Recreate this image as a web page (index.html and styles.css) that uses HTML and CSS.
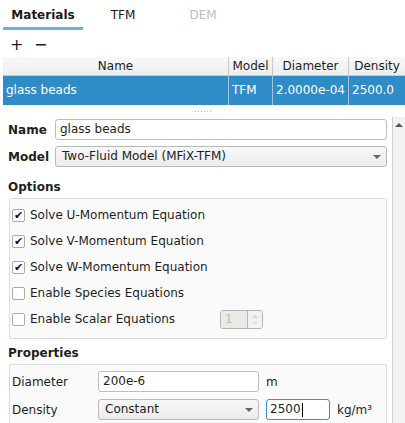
FILE: index.html
```html
<!DOCTYPE html>
<html>
<head>
<meta charset="utf-8">
<link rel="stylesheet" href="styles.css">
</head>
<body>
<div class="app">
  <div class="tabs">
    <div class="tab active">Materials</div>
    <div class="tab">TFM</div>
    <div class="tab disabled">DEM</div>
  </div>
  <div class="toolbar">
    <span class="tbtn">+</span>
    <span class="tbtn">−</span>
  </div>
  <div class="table">
    <div class="trow head">
      <div class="c c1">Name</div>
      <div class="c c2">Model</div>
      <div class="c c3">Diameter</div>
      <div class="c c4">Density</div>
    </div>
    <div class="trow sel">
      <div class="c c1 left">glass beads</div>
      <div class="c c2 left">TFM</div>
      <div class="c c3 left">2.0000e-04</div>
      <div class="c c4 left">2500.0</div>
    </div>
  </div>
  <div class="splitter"><span class="dots"></span></div>
  <div class="scrollarea">
    <div class="content">
      <div class="frow">
        <label class="blabel">Name</label>
        <div class="input grow">glass beads</div>
      </div>
      <div class="frow">
        <label class="blabel">Model</label>
        <div class="combo grow"><span>Two-Fluid Model (MFiX-TFM)</span><span class="arrow"></span></div>
      </div>
      <div class="section">Options</div>
      <div class="group options">
        <div class="chk"><span class="box on">✔</span><span>Solve U-Momentum Equation</span></div>
        <div class="chk"><span class="box on">✔</span><span>Solve V-Momentum Equation</span></div>
        <div class="chk"><span class="box on">✔</span><span>Solve W-Momentum Equation</span></div>
        <div class="chk"><span class="box"></span><span>Enable Species Equations</span></div>
        <div class="chk"><span class="box"></span><span class="sclabel">Enable Scalar Equations</span>
          <div class="spin"><span class="spinval">1</span><span class="spinbtn"><svg width="14" height="18" viewBox="0 0 14 18"><path d="M4 7 L7 4 L10 7 Z" fill="#d8d6d3"/><path d="M4 11 L7 14 L10 11 Z" fill="#e4e2df"/></svg></span></div>
        </div>
      </div>
      <div class="section prop">Properties</div>
      <div class="group props">
        <div class="prow">
          <span class="plabel">Diameter</span>
          <div class="input pin">200e-6</div>
          <span class="unit">m</span>
        </div>
        <div class="prow">
          <span class="plabel">Density</span>
          <div class="combo pin"><span>Constant</span><span class="arrow"></span></div>
          <div class="input focus">2500<span class="caret"></span></div>
          <span class="unit">kg/m³</span>
        </div>
      </div>
    </div>
    <div class="vscroll"><span class="up"></span></div>
  </div>
</div>
</body>
</html>
```
FILE: styles.css
```css
* { box-sizing: border-box; }
html, body { margin: 0; padding: 0; }
body {
  width: 405px; height: 423px; overflow: hidden;
  background: #ffffff;
  font-family: "DejaVu Sans", sans-serif;
  font-size: 12px;
  color: #1e1e1e;
}
.app { display: flex; flex-direction: column; height: 423px; }

.tabs { display: flex; padding-left: 3px; height: 30px; }
.tab {
  width: 80px; text-align: center; padding-top: 8px;
  font-size: 12px; color: #1a1a1a;
  border-bottom: 3px solid transparent;
}
.tab.active { font-weight: bold; border-bottom-color: #6aaeea; }
.tab.disabled { color: #bdbdbd; }

.toolbar { display: flex; gap: 14px; padding-left: 10px; height: 27px; align-items: center; padding-top: 3px; }
.tbtn { font-size: 16px; line-height: 16px; color: #222; width: 10px; text-align: center; }

.table { margin-left: 3px; display: flex; flex-direction: column; }
.trow { display: flex; }
.c { border-right: 1px solid #c8c8c8; text-align: center; white-space: nowrap; overflow: hidden; }
.c1 { width: 226px; }
.c2 { width: 44px; }
.c3 { width: 76px; }
.c4 { width: 56px; border-right: none; }
.head { height: 19px; background: linear-gradient(#f7f7f7, #eeeeee); border-bottom: 1px solid #c6c6c6; }
.head .c { line-height: 18px; }
.sel { height: 29px; background: #308cc6; color: #fff; }
.sel .c { line-height: 29px; border-right-color: #9cc6e3; text-align: left; padding-left: 3px; }

.splitter { height: 12px; display: flex; justify-content: center; align-items: center; }
.dots { width: 16px; height: 1px; background: repeating-linear-gradient(90deg, #bdbdbd 0 1px, transparent 1px 3px); }

.scrollarea { flex: 1; display: flex; min-height: 0; }
.content { flex: 1; padding: 1px 5px 0 8px; overflow: hidden; }
.vscroll { width: 13px; border-left: 1px solid #d0cfcd; background: #f3f2f0; position: relative; }
.vscroll .up { position: absolute; left: 2px; top: 6px; border-left: 4px solid transparent; border-right: 4px solid transparent; border-bottom: 4px solid #555; }

.frow { display: flex; align-items: center; height: 21px; margin-bottom: 6px; margin-top: 1px; }
.blabel { font-weight: bold; width: 47px; }
.grow { flex: 1; }
.input {
  height: 21px; border: 1px solid #bdbdbd; border-radius: 3px; background: #fff;
  padding: 0 4px; line-height: 19px;
}
.combo {
  height: 21px; border: 1px solid #b9b9b9; border-radius: 3px;
  background: linear-gradient(#f8f8f8, #ebebeb);
  padding: 0 6px; line-height: 19px; display: flex; justify-content: space-between; align-items: center;
}
.arrow { width: 0; height: 0; border-left: 4px solid transparent; border-right: 4px solid transparent; border-top: 4px solid #666; margin-right: -1px; }

.section { font-weight: bold; margin-top: 13px; height: 18px; }
.group { border: 1px solid #dcdcdc; border-radius: 2px; background: #fafafa; margin-left: 1px; }
.options { height: 141px; padding-top: 3px; }
.chk { display: flex; align-items: center; height: 26px; padding-left: 2px; }
.box {
  width: 13px; height: 13px; border: 1px solid #aaa; border-radius: 2px; background: #fff;
  margin-right: 5px; font-size: 11px; line-height: 11px; text-align: center; color: #111; font-weight: bold;
}
.sclabel { width: 190px; }
.spin { display: flex; height: 19px; width: 43px; border: 1px solid #b4b4b4; border-radius: 3px; overflow: hidden; }
.spinval { width: 27px; background: #ebe9e6; color: #c0bcb8; padding-left: 4px; line-height: 17px; border-right: 1px solid #b4b4b4; }
.spinbtn { flex: 1; background: #f3f2f0; display: flex; justify-content: center; }

.prop { margin-top: 7px; }
.props { height: 70px; padding-top: 6px; padding-left: 2px; }
.prow { display: flex; align-items: center; height: 21px; margin-bottom: 7px; }
.plabel { width: 86px; }
.pin { width: 161px; }
.unit { margin-left: 7px; }
.focus { width: 64px; margin-left: 7px; border-color: #3b8fd6; padding-left: 3px; display: flex; align-items: center; }
.caret { display: inline-block; width: 1px; height: 14px; background: #000; margin-left: 1px; }
```
